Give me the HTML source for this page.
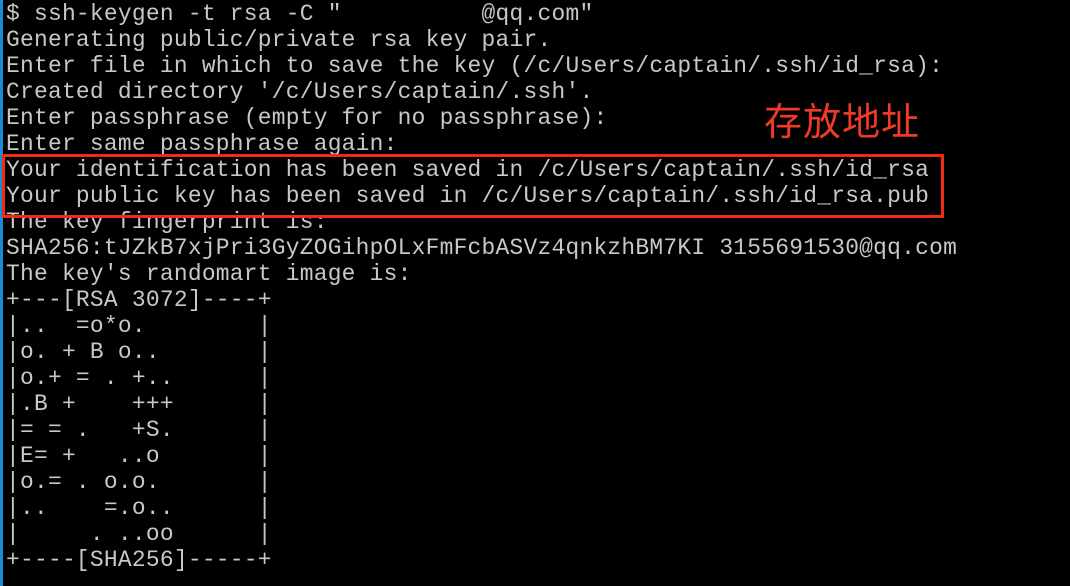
<!DOCTYPE html>
<html><head><meta charset="utf-8"><style>
html,body{margin:0;padding:0;background:#000;width:1070px;height:586px;overflow:hidden;position:relative}
.bar{position:absolute;left:0;top:0;width:3px;height:586px;background:#1a8ad4}
pre{position:absolute;left:6px;top:1px;margin:0;font-family:"Liberation Mono",monospace;font-size:22.9px;letter-spacing:0.25px;line-height:26px;color:#c8c8c8;white-space:pre}
.box{position:absolute;left:2px;top:154px;width:936px;height:58px;border:3px solid #f02a14}
.cn{position:absolute;left:764px;top:96px;font-family:"Noto Sans CJK SC",sans-serif;font-size:38px;line-height:46px;color:#f03a28;letter-spacing:1px}
</style></head><body>
<div class="bar"></div>
<pre>$ ssh-keygen -t rsa -C "          @qq.com"
Generating public/private rsa key pair.
Enter file in which to save the key (/c/Users/captain/.ssh/id_rsa):
Created directory '/c/Users/captain/.ssh'.
Enter passphrase (empty for no passphrase):
Enter same passphrase again:
Your identification has been saved in /c/Users/captain/.ssh/id_rsa
Your public key has been saved in /c/Users/captain/.ssh/id_rsa.pub
The key fingerprint is:
SHA256:tJZkB7xjPri3GyZOGihpOLxFmFcbASVz4qnkzhBM7KI 3155691530@qq.com
The key's randomart image is:
+---[RSA 3072]----+
|..  =o*o.        |
|o. + B o..       |
|o.+ = . +..      |
|.B +    +++      |
|= = .   +S.      |
|E= +   ..o       |
|o.= . o.o.       |
|..    =.o..      |
|     . ..oo      |
+----[SHA256]-----+</pre>
<div class="box"></div>
<div class="cn">存放地址</div>
</body></html>
